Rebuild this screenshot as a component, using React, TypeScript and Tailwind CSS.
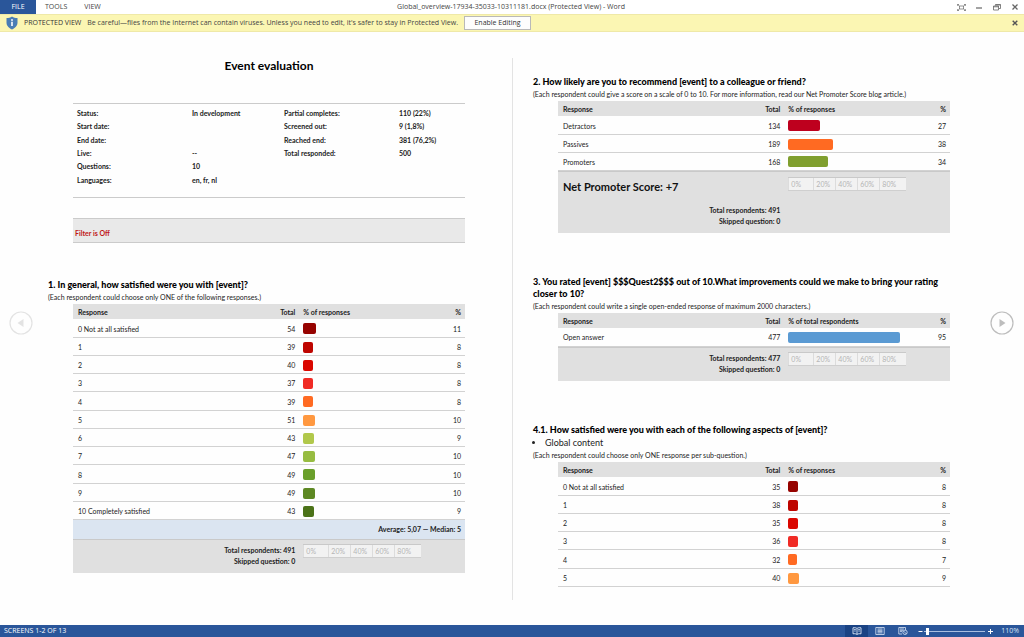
import type { ReactNode } from "react";

type Row = { label: string; total: number; pct: number; color: string };

const SHADES = [
  "#960300", "#be0500", "#da0700", "#f02b25", "#ff6a22", "#ff9840",
  "#b1c84b", "#97bc41", "#6a9f2b", "#5d8823", "#4b7218",
];

const makeRows = (totals: number[], pcts: number[]): Row[] =>
  totals.map((total, i) => ({
    label: i === 0 ? "0 Not at all satisfied" : i === 10 ? "10 Completely satisfied" : String(i),
    total,
    pct: pcts[i],
    color: SHADES[i],
  }));

const satisfaction = makeRows(
  [54, 39, 40, 37, 39, 51, 43, 47, 49, 49, 43],
  [11, 8, 8, 8, 8, 10, 9, 10, 10, 10, 9],
);
const aspects = makeRows([35, 38, 35, 36, 32, 40], [8, 8, 8, 8, 7, 9]);
const promoter: Row[] = [
  { label: "Detractors", total: 134, pct: 27, color: "#be001e" },
  { label: "Passives", total: 189, pct: 38, color: "#ff6a22" },
  { label: "Promoters", total: 168, pct: 34, color: "#809f2f" },
];
const openAnswers: Row[] = [{ label: "Open answer", total: 477, pct: 95, color: "#5a9ad3" }];

const info = [
  ["Status:", "In development", "Partial completes:", "110 (22%)"],
  ["Start date:", "", "Screened out:", "9 (1,8%)"],
  ["End date:", "", "Reached end:", "381 (76,2%)"],
  ["Live:", "--", "Total responded:", "500"],
  ["Questions:", "10", "", ""],
  ["Languages:", "en, fr, nl", "", ""],
];

function Scale() {
  return (
    <div className="grid h-[14px] w-[118px] grid-cols-[25fr_22fr_22fr_22fr_27fr] border-y border-t-[#c9c9c9] border-b-[#cfcfcf] bg-[#f2f2f2] text-[7px] leading-[12px] font-normal text-[#b5b5b5]">
      {["0%", "20%", "40%", "60%", "80%"].map((t) => (
        <span key={t} className="border-l border-[#dcdcdc] pl-[2px]">{t}</span>
      ))}
    </div>
  );
}

function Totals({ n }: { n: number }) {
  return (
    <div className="text-right leading-[11px] font-bold">
      <p>Total respondents: {n}</p>
      <p>Skipped question: 0</p>
    </div>
  );
}

function ResultTable({ rows, measure = "% of responses", children }: { rows: Row[]; measure?: string; children?: ReactNode }) {
  return (
    <table className="mt-px ml-[25px] w-[calc(100%-25px)] table-fixed border-collapse text-[7px] leading-[10px] text-[#1c1c1c]">
      <colgroup>
        <col className="w-[45%]" />
        <col className="w-[13%]" />
        <col className="w-[32%]" />
        <col className="w-[10%]" />
      </colgroup>
      <thead>
        <tr className="h-[15px] bg-[#e0e0e0]">
          <th className="p-0 pl-[5px] text-left">Response</th>
          <th className="p-0 pr-[5px] text-right">Total</th>
          <th className="p-0 pl-[3px] text-left">{measure}</th>
          <th className="p-0 pr-1 text-right">%</th>
        </tr>
      </thead>
      <tbody>
        {rows.map((r) => (
          <tr key={r.label} className="h-[18px] shadow-[inset_0_-1px_0_#d2d2d2] nth-[4n+1]:h-[19px]">
            <td className="p-0 pl-[5px]">{r.label}</td>
            <td className="p-0 pr-[5px] text-right">{r.total}</td>
            <td className="p-0 pl-[3px]">
              <div className="w-[118px]">
                <div className="h-[11px] rounded-[2px]" style={{ width: `${r.pct}%`, backgroundColor: r.color }} />
              </div>
            </td>
            <td className="p-0 pr-1 text-right">{r.pct}</td>
          </tr>
        ))}
      </tbody>
      {children && <tfoot>{children}</tfoot>}
    </table>
  );
}

function SummaryRow({ n }: { n: number }) {
  return (
    <tr className="h-[34px] border-t border-[#c9c9c9] bg-[#e0e0e0] align-top">
      <td colSpan={2} className="p-0 pt-[5px] pr-[5px]"><Totals n={n} /></td>
      <td colSpan={2} className="p-0 pt-1 pl-[3px]"><Scale /></td>
    </tr>
  );
}

function Question({ title, note, topic, children }: { title: string; note: string; topic?: string; children: ReactNode }) {
  return (
    <section>
      <h2 className="text-[9px] leading-[12px] font-black text-black">{title}</h2>
      {topic && (
        <ul className="list-disc pl-3 text-[9px] leading-[13px] text-[#222]">
          <li>{topic}</li>
        </ul>
      )}
      <p className="text-[7px] leading-[12px] text-[#222]">{note}</p>
      {children}
    </section>
  );
}

function PageButton({ dir }: { dir: "prev" | "next" }) {
  const prev = dir === "prev";
  return (
    <button
      type="button"
      aria-label={prev ? "Previous screen" : "Next screen"}
      className={prev ? "text-[#e3e3e3]" : "text-[#bdbdbd]"}
    >
      <svg viewBox="0 0 24 24" className="size-6" fill="none" stroke="currentColor">
        <circle cx="12" cy="12" r="11" strokeWidth="1.2" />
        <path d={prev ? "M14.5 8v8L8.5 12z" : "M9.5 8v8l6-4z"} fill="currentColor" stroke="none" />
      </svg>
    </button>
  );
}

const winButton = "flex size-[14px] items-center justify-center text-[#666]";

export default function App() {
  return (
    <div className="flex min-h-screen flex-col bg-[#fefefe] font-['Lato',sans-serif]">
      <header className="flex h-[14px] items-center bg-white font-['Open_Sans',sans-serif] text-[7px] text-[#444]">
        <nav className="flex flex-1 items-center self-stretch">
          <button type="button" className="w-9 self-stretch bg-[#2a569a] text-white">FILE</button>
          <button type="button" className="ml-[9px]">TOOLS</button>
          <button type="button" className="ml-[17px]">VIEW</button>
        </nav>
        <h1>Global_overview-17934-35033-10311181.docx (Protected View) - Word</h1>
        <div className="flex flex-1 justify-end gap-1 pr-[2px]">
          <button type="button" aria-label="Full screen" className={winButton}>
            <svg viewBox="0 0 9 7" className="h-[7px] w-[9px]" fill="none" stroke="currentColor" strokeWidth="0.7">
              <path d="M2.5 2h4v3h-4zM.5.5l2 1.5M8.5.5l-2 1.500M.5 6.500l2-1.500M8.500 6.500l-2-1.500M.5 1.800V.5h1.500M7 .5h1.500v1.300M8.500 5.200v1.300H7M2 6.500H.5V5.200" />
            </svg>
          </button>
          <button type="button" aria-label="Minimize" className={winButton}>
            <svg viewBox="0 0 8 8" className="size-2" stroke="currentColor" strokeWidth="1.2"><path d="M1 5h6" /></svg>
          </button>
          <button type="button" aria-label="Restore" className={winButton}>
            <svg viewBox="0 0 8 8" className="size-2" fill="none" stroke="currentColor" strokeWidth="0.8">
              <path d="M2.500 2.500v-1h5v4h-1.500M.5 3h5v4h-5zM.5 3.800h5M2.500 2h5" />
            </svg>
          </button>
          <button type="button" aria-label="Close" className={winButton}>
            <svg viewBox="0 0 8 8" className="size-2" stroke="currentColor" strokeWidth="1.3"><path d="M1.500 1.500l5 5M6.500 1.500l-5 5" /></svg>
          </button>
        </div>
      </header>

      <div className="flex h-[18px] items-center border-y border-[#efe9a8] bg-[#fbf6b3] px-[6px] font-['Open_Sans',sans-serif] text-[7px] text-[#444]">
        <svg viewBox="0 0 12 14" className="h-[14px] w-3">
          <path d="M6 .5c1.500 1 3.500 1.600 5.500 1.600v4.700c0 3-2.500 5.500-5.500 6.700C3 12.300.5 9.800.5 6.800V2.100C2.500 2.100 4.500 1.500 6 .5z" fill="#4a7db5" />
          <circle cx="6" cy="4" r="0.900" fill="#fff" />
          <path d="M5.200 5.700h1.600v4.200H5.200z" fill="#fff" />
        </svg>
        <span className="ml-[6px] font-medium text-[#333]">PROTECTED VIEW</span>
        <span className="ml-[6px]">
          Be careful—files from the Internet can contain viruses. Unless you need to edit, it's safer to stay in Protected View.
        </span>
        <button type="button" className="ml-[6px] h-[14px] w-[67px] border border-[#b9b9b9] bg-[#fdfdfd] leading-[12px] text-[#333]">Enable Editing</button>
        <button type="button" aria-label="Dismiss" className="ml-auto text-[#555]">
          <svg viewBox="0 0 6 6" className="size-[6px]" stroke="currentColor" strokeWidth="1.400"><path d="M.7.7l4.600 4.600M5.300.7L.7 5.300" /></svg>
        </button>
      </div>

      <main className="flex flex-1">
        <div className="flex w-12 items-center pb-3 pl-[9px]"><PageButton dir="prev" /></div>

        <article className="min-w-0 flex-1 pt-[26px] pr-[47px]">
          <div className="ml-[25px]">
            <h1 className="text-center text-[12px] leading-[16px] font-bold text-black">Event evaluation</h1>
            <div className="mt-[29px] border-y border-[#cbcbcb] pt-[3px] pb-[10px]">
              <div className="grid h-[80px] grid-cols-[115fr_92fr_115fr_66fr] pl-1 text-[7px] leading-[13px] font-bold text-[#222]">
                {info.flatMap((r, i) => r.map((c, j) => <span key={`${i}-${j}`} className="whitespace-nowrap">{c}</span>))}
              </div>
            </div>
            <div className="mt-5 h-[25px] border-y border-[#cbcbcb] bg-[#e9e9e9] pt-2 pl-[2px] text-[7px] leading-[13px] font-bold text-[#c01818]">
              Filter is Off
            </div>
          </div>
          <div className="mt-9">
            <Question title="1. In general, how satisfied were you with [event]?" note="(Each respondent could choose only ONE of the following responses.)">
              <ResultTable rows={satisfaction}>
                <tr className="h-[19px] bg-[#dbe5f1] text-right font-bold">
                  <td colSpan={4} className="p-0 pr-1">Average: 5,07 — Median: 5</td>
                </tr>
                <SummaryRow n={491} />
              </ResultTable>
            </Question>
          </div>
        </article>

        <div className="mt-[26px] mb-[25px] w-px bg-[#e3e3e3]" />

        <article className="flex min-w-0 flex-1 flex-col gap-[43px] pt-11 pr-[6px] pl-5">
          <Question title="2. How likely are you to recommend [event] to a colleague or friend?" note="(Each respondent could give a score on a scale of 0 to 10. For more information, read our Net Promoter Score blog article.)">
            <ResultTable rows={promoter}>
              <tr className="h-[62px] border-t border-[#c9c9c9] bg-[#e0e0e0] align-top">
                <td colSpan={2} className="p-0 pt-[7px] pr-[5px] pl-[5px]">
                  <p className="mb-[11px] text-[11px] leading-[15px] font-bold text-[#111]">Net Promoter Score: +7</p>
                  <Totals n={491} />
                </td>
                <td colSpan={2} className="p-0 pt-[5px] pl-[3px]"><Scale /></td>
              </tr>
            </ResultTable>
          </Question>
          <Question title="3. You rated [event] $$$Quest2$$$ out of 10.What improvements could we make to bring your rating closer to 10?" note="(Each respondent could write a single open-ended response of maximum 2000 characters.)">
            <ResultTable rows={openAnswers} measure="% of total respondents">
              <SummaryRow n={477} />
            </ResultTable>
          </Question>
          <Question title="4.1. How satisfied were you with each of the following aspects of [event]?" topic="Global content" note="(Each respondent could choose only ONE response per sub-question.)">
            <ResultTable rows={aspects} />
          </Question>
        </article>

        <div className="flex w-[68px] items-center justify-end pr-[10px] pb-3"><PageButton dir="next" /></div>
      </main>

      <footer className="flex h-3 items-center bg-[#2a569a] pr-[5px] pl-1 font-['Open_Sans',sans-serif] text-[7px] leading-[12px] text-white">
        <span>SCREENS 1-2 OF 13</span>
        <div className="ml-auto flex items-center text-[#dbe6f5]">
          <button type="button" aria-label="Read mode" className="flex h-3 w-[23px] items-center justify-center bg-[#1a4384]">
            <svg viewBox="0 0 10 8" className="h-2 w-[10px]" fill="none" stroke="currentColor" strokeWidth="0.9">
              <path d="M5 1.500v6M5 1.500C4 .6 2.500.6 1 .8v6c1.500-.2 3-.2 4 .7 1-.9 2.500-.9 4-.7v-6C7.500.6 6 .6 5 1.500zM2.200 2.500h1.500M2.200 4h1.500M6.300 2.500h1.500M6.300 4h1.500" />
            </svg>
          </button>
          <button type="button" aria-label="Print layout" className="flex w-6 justify-center">
            <svg viewBox="0 0 10 8" className="h-2 w-[10px]" fill="none" stroke="currentColor" strokeWidth="0.800">
              <path d="M.8.5h8.400v7H.8zM2.500 2h5M2.500 3.300h5M2.500 4.600h5M2.500 5.900h5" />
            </svg>
          </button>
          <button type="button" aria-label="Web layout" className="flex w-[22px] justify-center">
            <svg viewBox="0 0 10 8" className="h-2 w-[10px]" fill="none" stroke="currentColor" strokeWidth="0.800">
              <path d="M4 7H.8V.5h6.700V3M2 2h4M2 3.300h3M2 4.600h2" />
              <circle cx="7" cy="5.300" r="2.200" />
              <path d="M5.500 4l3 3" />
            </svg>
          </button>
          <button type="button" aria-label="Zoom out" className="ml-[2px] flex w-2 justify-center text-white">
            <svg viewBox="0 0 5 5" className="size-[5px]" stroke="currentColor"><path d="M.5 2.500h4" /></svg>
          </button>
          <input
            type="range"
            aria-label="Zoom"
            min={10}
            max={500}
            defaultValue={25}
            className="h-3 w-[61px] appearance-none bg-transparent [&::-webkit-slider-runnable-track]:h-px [&::-webkit-slider-runnable-track]:bg-[#a9bfe0] [&::-webkit-slider-thumb]:mt-[-3px] [&::-webkit-slider-thumb]:h-[7px] [&::-webkit-slider-thumb]:w-[3px] [&::-webkit-slider-thumb]:appearance-none [&::-webkit-slider-thumb]:bg-white"
          />
          <button type="button" aria-label="Zoom in" className="ml-[1px] flex w-2 justify-center text-white">
            <svg viewBox="0 0 5 5" className="size-[5px]" stroke="currentColor"><path d="M0 2.500h5M2.500 0v5" /></svg>
          </button>
          <span className="ml-[7px]">110%</span>
        </div>
      </footer>
    </div>
  );
}
